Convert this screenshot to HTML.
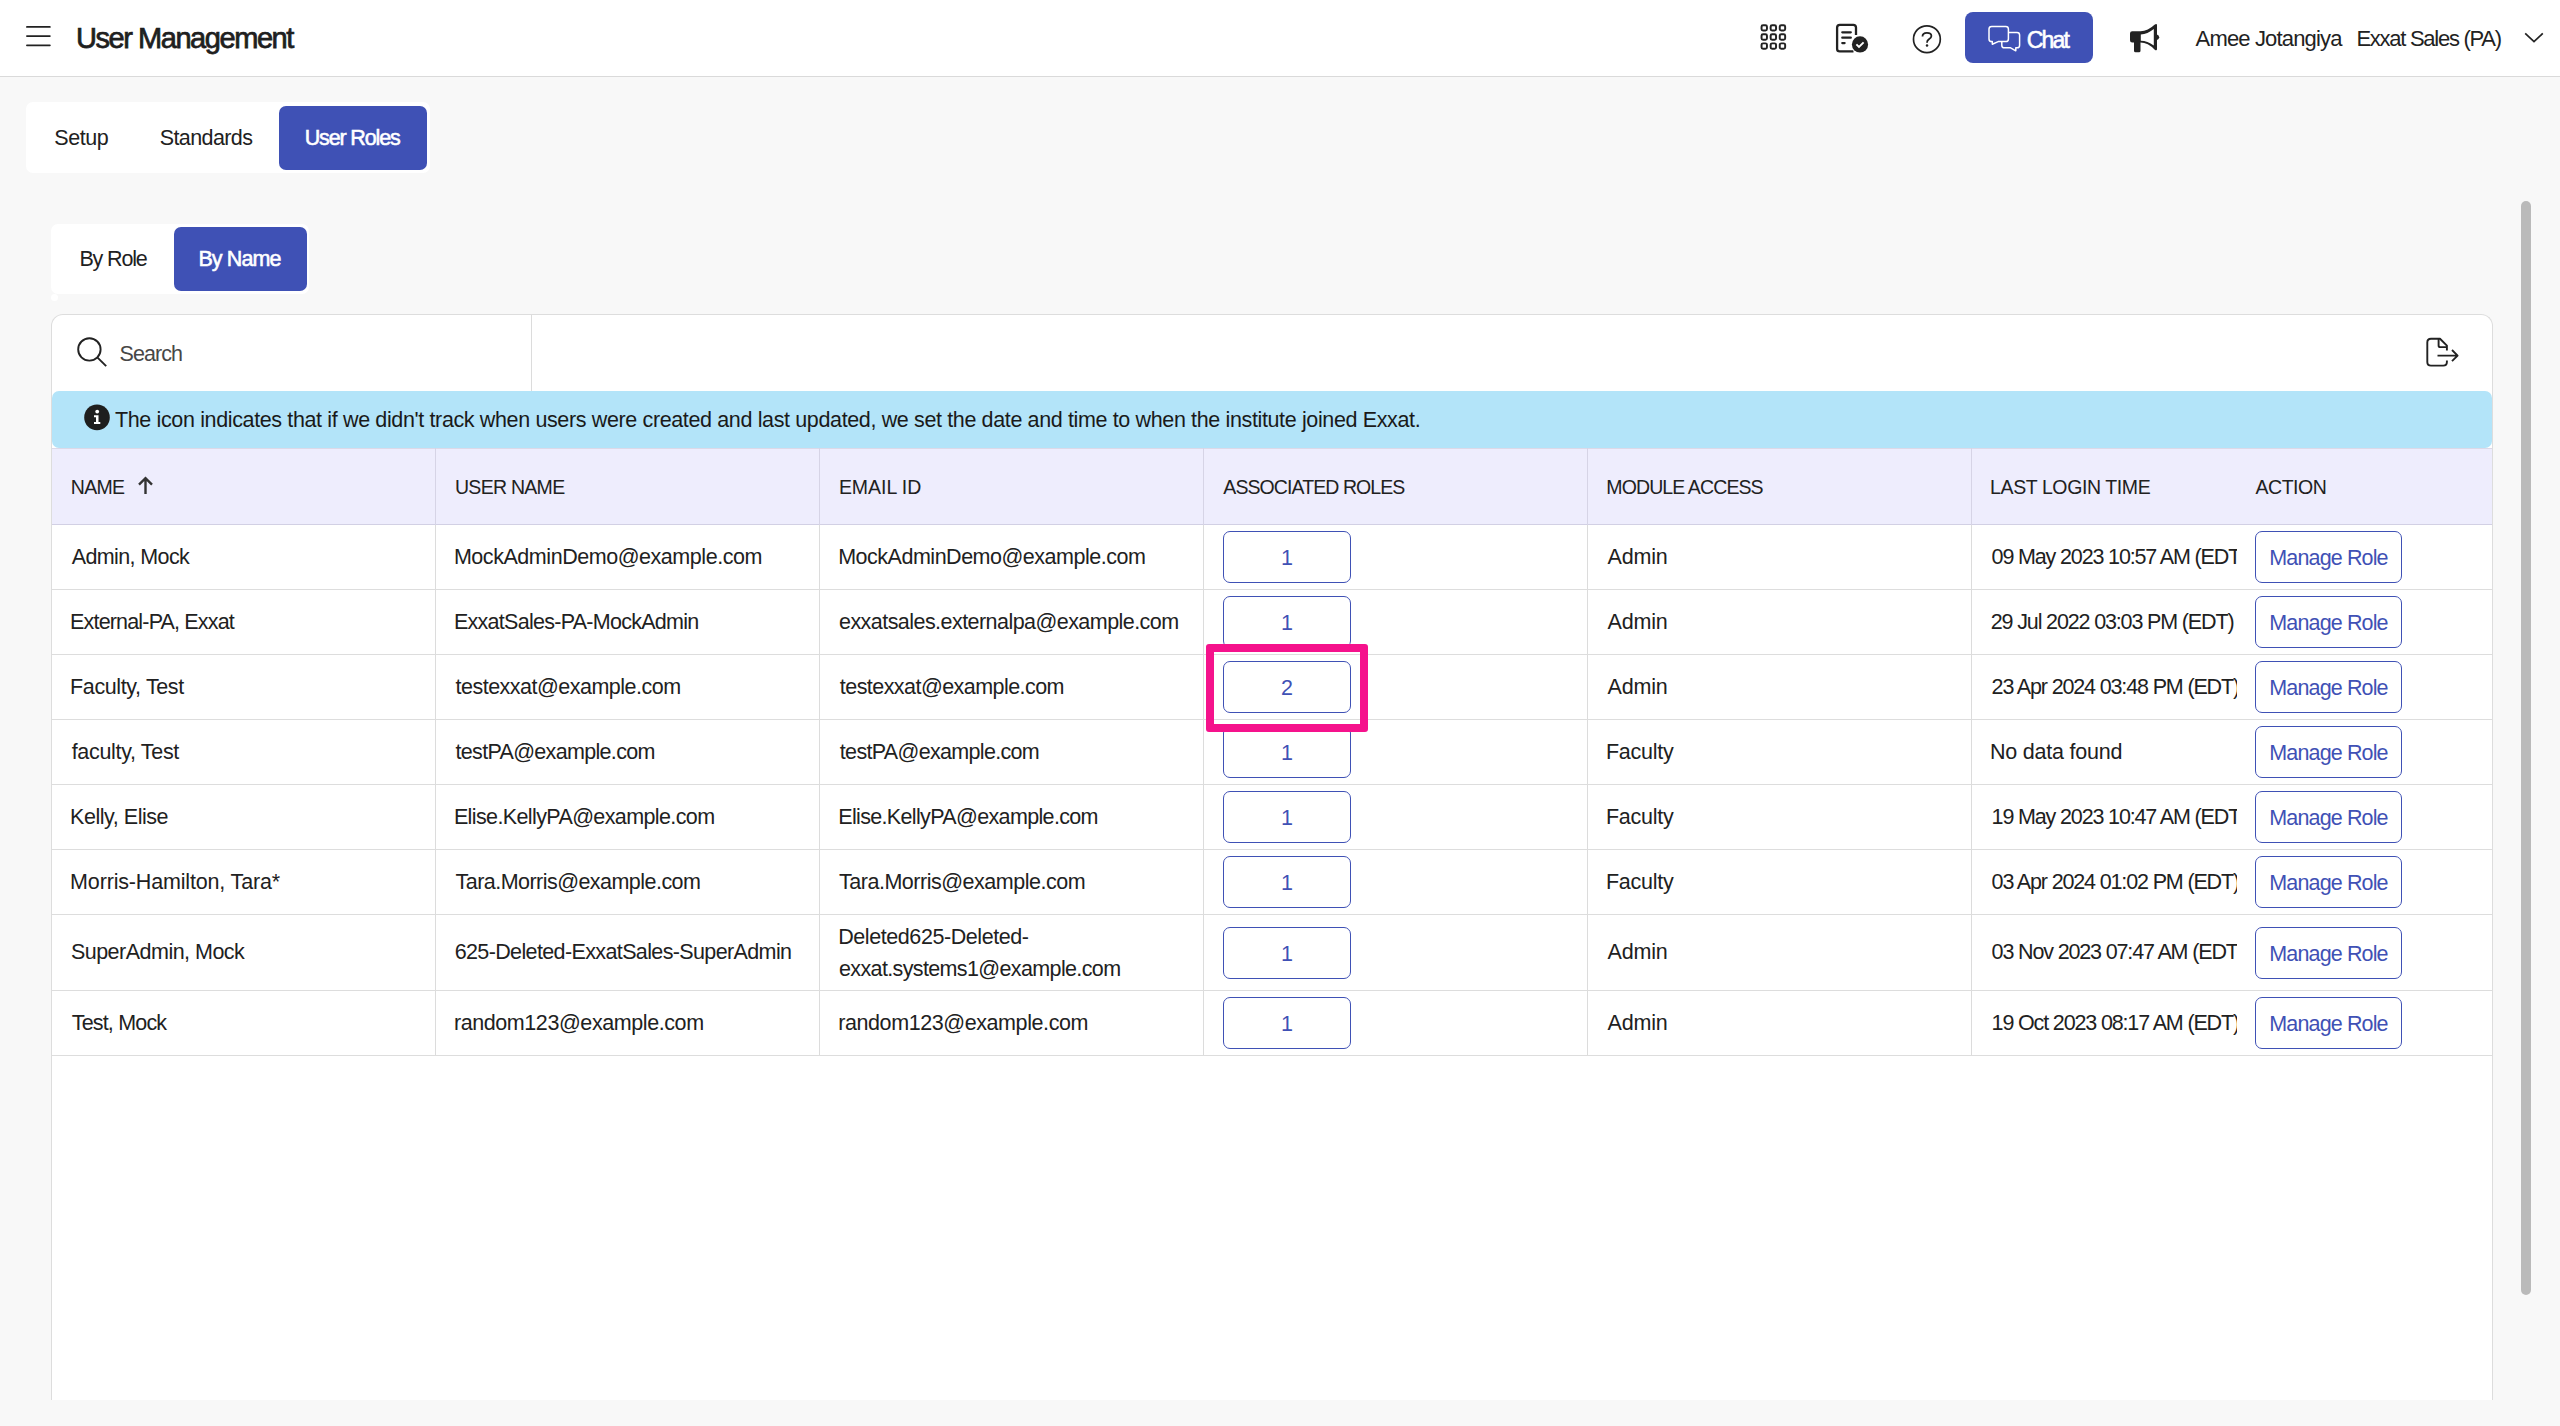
<!DOCTYPE html>
<html><head><meta charset="utf-8">
<title>User Management</title>
<style>
*{box-sizing:border-box;margin:0;padding:0}
html,body{width:2560px;height:1426px;overflow:hidden}
body{background:#f8f8f8;font-family:"Liberation Sans",sans-serif;color:#212121;position:relative}
.abs{position:absolute}
svg{position:absolute;overflow:visible}
.t{position:absolute;white-space:nowrap;line-height:1}
.hdr{left:0;top:0;width:2560px;height:77px;background:#fff;border-bottom:1px solid #dadada}
.tabs{left:26px;top:102px;width:404px;height:71px;background:#fff;border-radius:7px}
.btn-active{background:#3f51b5;border-radius:7px}
.card{left:51px;top:314px;width:2442px;height:1086px;background:#fff;border:1px solid #dddddd;border-bottom:none;border-radius:12px 12px 0 0}
.banner{left:52px;top:391px;width:2440px;height:57px;background:#b3e4f9;border-radius:7px}
.thead{left:52px;top:448px;width:2440px;height:77px;background:#eeedfd;border-top:1px solid #dcd9e8;border-bottom:1px solid #d2d0e4}
.vl{position:absolute;width:1px;background:#dcdcdc}
.vlh{position:absolute;width:1px;background:#d6d4e6}
.hl{position:absolute;height:1px;background:#dddddd;left:52px;width:2440px}
.rb,.mb{position:absolute;height:52px;border:1.5px solid #3f51b5;border-radius:7px;color:#3f51b5;font-size:21.5px;text-align:center;line-height:1}
.rb{left:1223px;width:128px;padding-top:16px}
.mb{left:2255px;width:147px;padding-top:16px}
.scroll{left:2521px;top:201px;width:10px;height:1094px;background:#bababa;border-radius:5px}
</style></head>
<body>
<div class="abs hdr"></div>
<svg style="left:0;top:0" width="60" height="60" viewBox="0 0 60 60"><path d="M26.9 26.9H49.9M26.9 36.1H49.9M26.9 45.3H49.9" stroke="#222" stroke-width="1.7" stroke-linecap="round" fill="none"/></svg>

<!-- grid icon -->
<svg style="left:1758px;top:21px" width="32" height="32" viewBox="0 0 32 32" fill="none" stroke="#222" stroke-width="1.95">
<rect x="3.55" y="4.15" width="5.4" height="5.4" rx="1.5"/><rect x="12.65" y="4.15" width="5.4" height="5.4" rx="1.5"/><rect x="21.75" y="4.15" width="5.4" height="5.4" rx="1.5"/>
<rect x="3.55" y="13.25" width="5.4" height="5.4" rx="1.5"/><rect x="12.65" y="13.25" width="5.4" height="5.4" rx="1.5"/><rect x="21.75" y="13.25" width="5.4" height="5.4" rx="1.5"/>
<rect x="3.55" y="22.35" width="5.4" height="5.4" rx="1.5"/><rect x="12.65" y="22.35" width="5.4" height="5.4" rx="1.5"/><rect x="21.75" y="22.35" width="5.4" height="5.4" rx="1.5"/>
</svg>
<!-- doc check icon -->
<svg style="left:1834px;top:22px" width="36" height="32" viewBox="0 0 36 32">
<path d="M22 13V5.6Q22 2.9 19.3 2.9H5.8Q3.1 2.9 3.1 5.6V26.7Q3.1 29.4 5.8 29.4H19.5" fill="none" stroke="#222" stroke-width="2.3"/>
<path d="M8.3 10.3H16.8M8.3 15.7H16.8M8.3 21.1H10.6" stroke="#222" stroke-width="2.3" stroke-linecap="round"/>
<circle cx="26" cy="22.4" r="8.9" fill="#fff"/>
<circle cx="26" cy="22.4" r="8.1" fill="#222"/>
<path d="M22.4 22.4L25 25L29.6 20.4" fill="none" stroke="#fff" stroke-width="1.9"/>
</svg>
<!-- help -->
<svg style="left:1910px;top:22px" width="34" height="34" viewBox="0 0 34 34" fill="none" stroke="#222">
<circle cx="16.9" cy="17.2" r="13.4" stroke-width="1.7"/>
<path d="M12.5 14.6Q12.5 10.9 16.9 10.9Q21.4 10.9 21.4 14.1Q21.4 16.1 18.8 17.4Q17 18.3 17 20.8" stroke-width="1.8"/>
<circle cx="17" cy="23.4" r="1.25" fill="#222" stroke="none"/>
</svg>
<!-- chat button -->
<div class="abs" style="left:1965px;top:12px;width:128px;height:51px;background:#3f51b5;border-radius:8px"></div>
<svg style="left:1986px;top:24px" width="36" height="30" viewBox="0 0 36 30" fill="none" stroke="#fff" stroke-width="1.5" stroke-linejoin="round">
<path d="M5.6 2.4H19.8Q22.4 2.4 22.4 5V15Q22.4 17.6 19.8 17.6H12.2L6.3 20.3V17.6H5.6Q3 17.6 3 15V5Q3 2.4 5.6 2.4Z"/>
<path d="M22.4 8.4H31Q33.6 8.4 33.6 11V21.2Q33.6 23.8 31 23.8H29.8V26.8L24.6 23.8H18.4Q15.8 23.8 15.8 21.2V17.6"/>
</svg>

<!-- megaphone -->
<svg style="left:2126px;top:20px" width="38" height="36" viewBox="0 0 38 36">
<path d="M6.2 11.2Q4 11.2 4 13.4V20.2Q4 22.4 6.2 22.4H8V30.8Q8 32.3 9.5 32.3H13Q14.5 32.3 14.5 30.8V22.4Q22 22.6 28.5 29.4Q29.5 30.3 30.2 30.3Q31 30.3 31 29V5.2Q31 3.9 30.2 3.9Q29.5 3.9 28.5 4.8Q22 11 14.5 11.2Z" fill="#222"/>
<path d="M14.8 14.6Q21.5 14 27.8 9V25.4Q21.5 20.8 14.8 20.7Z" fill="#fff"/>
<path d="M30.6 14.2Q33.2 15 33.2 17.2Q33.2 19.4 30.6 20.2Z" fill="#222"/>
</svg>
<svg style="left:2522px;top:29px" width="24" height="16" viewBox="0 0 24 16"><path d="M3.2 4.4L12 12.6L20.8 4.4" fill="none" stroke="#222" stroke-width="1.7"/></svg>

<!-- tabs -->
<div class="abs tabs"></div>
<div class="abs btn-active" style="left:279px;top:106px;width:148px;height:64px"></div>
<div class="abs" style="left:51px;top:224px;width:258px;height:70px;background:#fff;border-radius:7px"></div>
<div class="abs btn-active" style="left:174px;top:227px;width:133px;height:64px"></div>
<div class="abs" style="left:51px;top:294px;width:7px;height:7px;background:#fff;border-radius:50%"></div>

<!-- card -->
<div class="abs card"></div>
<div class="vl" style="left:531px;top:315px;height:76px"></div>
<svg style="left:74px;top:335px" width="36" height="36" viewBox="0 0 36 36" fill="none" stroke="#222" stroke-width="1.9"><circle cx="15.4" cy="14.4" r="11.2"/><path d="M23.3 22.3L32.2 31.2"/></svg>
<svg style="left:2422px;top:334px" width="40" height="36" viewBox="0 0 40 36" fill="none" stroke="#222" stroke-width="1.9" stroke-linejoin="round">
<path d="M24.9 16.5V11.6L18 4.8H9Q5.3 4.8 5.3 8.5V27.9Q5.3 31.6 9 31.6H21.2Q24.9 31.6 24.9 27.9V26.6"/>
<path d="M16.6 5V11.4Q16.6 13.1 18.3 13.1H24.6"/>
<path d="M15.5 21.6H35.6M30 16L35.6 21.6L30 27.2"/>
</svg>

<div class="abs banner"></div>
<svg style="left:84px;top:404px" width="26" height="26" viewBox="0 0 26 26"><circle cx="13" cy="13.4" r="12.8" fill="#1e1e1e"/><circle cx="13.2" cy="7.6" r="1.9" fill="#fff"/><path d="M10 11.2H14.5V18H16.3V20H10V18H12V13.2H10Z" fill="#fff"/></svg>

<!-- table header -->
<div class="abs thead"></div>
<div class="vlh" style="left:435px;top:448px;height:77px"></div>
<div class="vlh" style="left:819px;top:448px;height:77px"></div>
<div class="vlh" style="left:1203px;top:448px;height:77px"></div>
<div class="vlh" style="left:1587px;top:448px;height:77px"></div>
<div class="vlh" style="left:1971px;top:448px;height:77px"></div>
<div class="vl" style="left:435px;top:525px;height:531px"></div>
<div class="vl" style="left:819px;top:525px;height:531px"></div>
<div class="vl" style="left:1203px;top:525px;height:531px"></div>
<div class="vl" style="left:1587px;top:525px;height:531px"></div>
<div class="vl" style="left:1971px;top:525px;height:531px"></div>
<svg style="left:134px;top:474px" width="22" height="24" viewBox="0 0 22 24"><path d="M11.5 20V4.6M5 10.6L11.5 4.2L18 10.6" fill="none" stroke="#333" stroke-width="2.4"/></svg>

<div class="t" id="title" style="left:75.9px;top:24.0px;font-size:29px;letter-spacing:-1.436px;color:#1f1f1f;-webkit-text-stroke:0.75px #1f1f1f">User Management</div>
<div class="t" id="uname1" style="left:2195.6px;top:27.5px;font-size:22px;letter-spacing:-0.844px;color:#222">Amee Jotangiya</div>
<div class="t" id="uname2" style="left:2356.4px;top:27.5px;font-size:22px;letter-spacing:-1.267px;color:#222">Exxat Sales (PA)</div>
<div class="t" id="chat" style="left:2026.7px;top:28.5px;font-size:23px;letter-spacing:-1.832px;color:#fff;-webkit-text-stroke:0.55px #fff">Chat</div>
<div class="t" id="setup" style="left:54.2px;top:128.0px;font-size:21.5px;letter-spacing:-0.400px;color:#212121">Setup</div>
<div class="t" id="standards" style="left:159.7px;top:128.0px;font-size:21.5px;letter-spacing:-0.588px;color:#212121">Standards</div>
<div class="t" id="userroles" style="left:304.7px;top:128.0px;font-size:21.5px;letter-spacing:-1.148px;color:#fff;-webkit-text-stroke:0.55px #fff">User Roles</div>
<div class="t" id="byrole" style="left:79.4px;top:249.0px;font-size:21.5px;letter-spacing:-1.149px;color:#212121">By Role</div>
<div class="t" id="byname" style="left:198.4px;top:249.0px;font-size:21.5px;letter-spacing:-0.900px;color:#fff;-webkit-text-stroke:0.55px #fff">By Name</div>
<div class="t" id="search" style="left:119.5px;top:344.0px;font-size:21.5px;letter-spacing:-0.940px;color:#474747">Search</div>
<div class="t" id="banner" style="left:115.0px;top:410.0px;font-size:21.5px;letter-spacing:-0.365px;color:#1a1a1a">The icon indicates that if we didn't track when users were created and last updated, we set the date and time to when the institute joined Exxat.</div>
<div class="t" id="h1" style="left:70.8px;top:477.5px;font-size:19.5px;letter-spacing:-0.669px;color:#212121">NAME</div>
<div class="t" id="h2" style="left:455.0px;top:477.5px;font-size:19.5px;letter-spacing:-0.725px;color:#212121">USER NAME</div>
<div class="t" id="h3" style="left:838.9px;top:477.5px;font-size:19.5px;letter-spacing:-0.044px;color:#212121">EMAIL ID</div>
<div class="t" id="h4" style="left:1223.3px;top:477.5px;font-size:19.5px;letter-spacing:-0.914px;color:#212121">ASSOCIATED ROLES</div>
<div class="t" id="h5" style="left:1606.3px;top:477.5px;font-size:19.5px;letter-spacing:-0.886px;color:#212121">MODULE ACCESS</div>
<div class="t" id="h6" style="left:1990.1px;top:477.5px;font-size:19.5px;letter-spacing:-0.400px;color:#212121">LAST LOGIN TIME</div>
<div class="t" id="h7" style="left:2255.5px;top:477.5px;font-size:19.5px;letter-spacing:-0.460px;color:#212121">ACTION</div>
<div class="t" id="r0n" style="left:71.7px;top:547.0px;font-size:21.5px;letter-spacing:-0.610px;color:#212121">Admin, Mock</div>
<div class="t" id="r0u" style="left:453.9px;top:547.0px;font-size:21.5px;letter-spacing:-0.451px;color:#212121">MockAdminDemo@example.com</div>
<div class="t" id="r0e" style="left:838.2px;top:547.0px;font-size:21.5px;letter-spacing:-0.488px;color:#212121">MockAdminDemo@example.com</div>
<div class="t" id="r0m" style="left:1607.5px;top:547.0px;font-size:21.5px;letter-spacing:-0.175px;color:#212121">Admin</div>
<div class="t" style="left:1991.6px;top:547.0px;font-size:21.5px;letter-spacing:-1.148px;color:#212121;width:245.4px;overflow:hidden"><span id="r0l">09 May 2023 10:57 AM (EDT)</span></div>
<div class="t" id="r1n" style="left:70.1px;top:612.0px;font-size:21.5px;letter-spacing:-0.833px;color:#212121">External-PA, Exxat</div>
<div class="t" id="r1u" style="left:453.9px;top:612.0px;font-size:21.5px;letter-spacing:-0.722px;color:#212121">ExxatSales-PA-MockAdmin</div>
<div class="t" id="r1e" style="left:839.0px;top:612.0px;font-size:21.5px;letter-spacing:-0.547px;color:#212121">exxatsales.externalpa@example.com</div>
<div class="t" id="r1m" style="left:1607.5px;top:612.0px;font-size:21.5px;letter-spacing:-0.175px;color:#212121">Admin</div>
<div class="t" style="left:1990.8px;top:612.0px;font-size:21.5px;letter-spacing:-1.148px;color:#212121;width:246.2px;overflow:hidden"><span id="r1l">29 Jul 2022 03:03 PM (EDT)</span></div>
<div class="t" id="r2n" style="left:70.1px;top:677.0px;font-size:21.5px;letter-spacing:-0.386px;color:#212121">Faculty, Test</div>
<div class="t" id="r2u" style="left:455.5px;top:677.0px;font-size:21.5px;letter-spacing:-0.505px;color:#212121">testexxat@example.com</div>
<div class="t" id="r2e" style="left:839.8px;top:677.0px;font-size:21.5px;letter-spacing:-0.550px;color:#212121">testexxat@example.com</div>
<div class="t" id="r2m" style="left:1607.5px;top:677.0px;font-size:21.5px;letter-spacing:-0.175px;color:#212121">Admin</div>
<div class="t" style="left:1991.6px;top:677.0px;font-size:21.5px;letter-spacing:-1.148px;color:#212121;width:245.4px;overflow:hidden"><span id="r2l">23 Apr 2024 03:48 PM (EDT)</span></div>
<div class="t" id="r3n" style="left:71.7px;top:742.0px;font-size:21.5px;letter-spacing:-0.325px;color:#212121">faculty, Test</div>
<div class="t" id="r3u" style="left:455.5px;top:742.0px;font-size:21.5px;letter-spacing:-0.678px;color:#212121">testPA@example.com</div>
<div class="t" id="r3e" style="left:839.8px;top:742.0px;font-size:21.5px;letter-spacing:-0.675px;color:#212121">testPA@example.com</div>
<div class="t" id="r3m" style="left:1605.9px;top:742.0px;font-size:21.5px;letter-spacing:-0.251px;color:#212121">Faculty</div>
<div class="t" style="left:1990.0px;top:742.0px;font-size:21.5px;letter-spacing:-0.219px;color:#212121;width:247.0px;overflow:hidden"><span id="r3l">No data found</span></div>
<div class="t" id="r4n" style="left:70.1px;top:807.0px;font-size:21.5px;letter-spacing:-0.465px;color:#212121">Kelly, Elise</div>
<div class="t" id="r4u" style="left:453.9px;top:807.0px;font-size:21.5px;letter-spacing:-0.615px;color:#212121">Elise.KellyPA@example.com</div>
<div class="t" id="r4e" style="left:838.2px;top:807.0px;font-size:21.5px;letter-spacing:-0.650px;color:#212121">Elise.KellyPA@example.com</div>
<div class="t" id="r4m" style="left:1605.9px;top:807.0px;font-size:21.5px;letter-spacing:-0.251px;color:#212121">Faculty</div>
<div class="t" style="left:1991.6px;top:807.0px;font-size:21.5px;letter-spacing:-1.148px;color:#212121;width:245.4px;overflow:hidden"><span id="r4l">19 May 2023 10:47 AM (EDT)</span></div>
<div class="t" id="r5n" style="left:70.1px;top:872.0px;font-size:21.5px;letter-spacing:-0.162px;color:#212121">Morris-Hamilton, Tara*</div>
<div class="t" id="r5u" style="left:455.5px;top:872.0px;font-size:21.5px;letter-spacing:-0.534px;color:#212121">Tara.Morris@example.com</div>
<div class="t" id="r5e" style="left:839.0px;top:872.0px;font-size:21.5px;letter-spacing:-0.483px;color:#212121">Tara.Morris@example.com</div>
<div class="t" id="r5m" style="left:1605.9px;top:872.0px;font-size:21.5px;letter-spacing:-0.251px;color:#212121">Faculty</div>
<div class="t" style="left:1991.6px;top:872.0px;font-size:21.5px;letter-spacing:-1.148px;color:#212121;width:245.4px;overflow:hidden"><span id="r5l">03 Apr 2024 01:02 PM (EDT)</span></div>
<div class="t" id="r6n" style="left:70.9px;top:942.0px;font-size:21.5px;letter-spacing:-0.511px;color:#212121">SuperAdmin, Mock</div>
<div class="t" id="r6u" style="left:454.7px;top:942.0px;font-size:21.5px;letter-spacing:-0.625px;color:#212121">625-Deleted-ExxatSales-SuperAdmin</div>
<div class="t" id="r6e0" style="left:838.2px;top:927.0px;font-size:21.5px;letter-spacing:-0.421px;color:#212121">Deleted625-Deleted-</div>
<div class="t" id="r6e1" style="left:839.0px;top:959.0px;font-size:21.5px;letter-spacing:-0.632px;color:#212121">exxat.systems1@example.com</div>
<div class="t" id="r6m" style="left:1607.5px;top:942.0px;font-size:21.5px;letter-spacing:-0.175px;color:#212121">Admin</div>
<div class="t" style="left:1991.6px;top:942.0px;font-size:21.5px;letter-spacing:-1.148px;color:#212121;width:245.4px;overflow:hidden"><span id="r6l">03 Nov 2023 07:47 AM (EDT)</span></div>
<div class="t" id="r7n" style="left:71.7px;top:1013.0px;font-size:21.5px;letter-spacing:-0.812px;color:#212121">Test, Mock</div>
<div class="t" id="r7u" style="left:453.9px;top:1013.0px;font-size:21.5px;letter-spacing:-0.415px;color:#212121">random123@example.com</div>
<div class="t" id="r7e" style="left:838.2px;top:1013.0px;font-size:21.5px;letter-spacing:-0.410px;color:#212121">random123@example.com</div>
<div class="t" id="r7m" style="left:1607.5px;top:1013.0px;font-size:21.5px;letter-spacing:-0.175px;color:#212121">Admin</div>
<div class="t" style="left:1991.6px;top:1013.0px;font-size:21.5px;letter-spacing:-1.148px;color:#212121;width:245.4px;overflow:hidden"><span id="r7l">19 Oct 2023 08:17 AM (EDT)</span></div>
<div class="hl" style="top:589.0px"></div>
<div class="hl" style="top:654.0px"></div>
<div class="hl" style="top:719.0px"></div>
<div class="hl" style="top:784.0px"></div>
<div class="hl" style="top:849.0px"></div>
<div class="hl" style="top:914.0px"></div>
<div class="hl" style="top:990.0px"></div>
<div class="hl" style="top:1055.0px"></div>
<div class="rb" style="top:531.0px"><span id="rb0">1</span></div>
<div class="mb" style="top:531.0px"><span id="mb0" style="letter-spacing:-0.870px">Manage Role</span></div>
<div class="rb" style="top:596.0px"><span id="rb1">1</span></div>
<div class="mb" style="top:596.0px"><span id="mb1" style="letter-spacing:-0.870px">Manage Role</span></div>
<div class="rb" style="top:661.0px"><span id="rb2">2</span></div>
<div class="mb" style="top:661.0px"><span id="mb2" style="letter-spacing:-0.870px">Manage Role</span></div>
<div class="rb" style="top:726.0px"><span id="rb3">1</span></div>
<div class="mb" style="top:726.0px"><span id="mb3" style="letter-spacing:-0.870px">Manage Role</span></div>
<div class="rb" style="top:791.0px"><span id="rb4">1</span></div>
<div class="mb" style="top:791.0px"><span id="mb4" style="letter-spacing:-0.870px">Manage Role</span></div>
<div class="rb" style="top:856.0px"><span id="rb5">1</span></div>
<div class="mb" style="top:856.0px"><span id="mb5" style="letter-spacing:-0.870px">Manage Role</span></div>
<div class="rb" style="top:926.5px"><span id="rb6">1</span></div>
<div class="mb" style="top:926.5px"><span id="mb6" style="letter-spacing:-0.870px">Manage Role</span></div>
<div class="rb" style="top:997.0px"><span id="rb7">1</span></div>
<div class="mb" style="top:997.0px"><span id="mb7" style="letter-spacing:-0.870px">Manage Role</span></div>

<!-- highlight -->
<div class="abs" style="left:1206px;top:644px;width:162px;height:88px;border:8px solid #f5128c;border-radius:3px"></div>

<div class="abs scroll"></div>
</body></html>
